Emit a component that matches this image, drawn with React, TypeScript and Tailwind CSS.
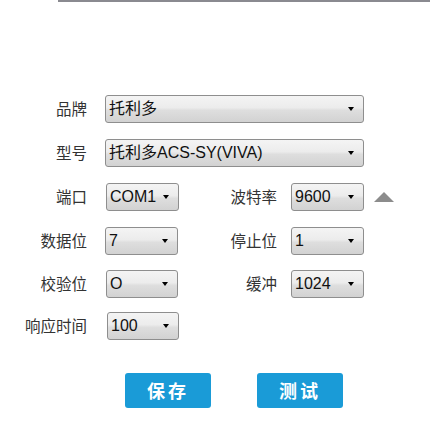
const cjk = "font-['Liberation_Sans','Noto_Sans_CJK_SC',sans-serif]";

const Select = ({ value, width }: { value: string; width: string }) => (
  <div
    className={`${width} h-[28px] flex items-center justify-between pl-[3px] pr-[9px] border border-[#8e8e8e] rounded-[3px] bg-[linear-gradient(to_bottom,#f4f4f4_0%,#ececec_45%,#dedede_55%,#d2d2d2_100%)] text-[16px] text-[#111] ${cjk}`}
  >
    <span className="leading-none">{value}</span>
    <span className="w-0 h-0 border-l-[3.5px] border-r-[3.5px] border-t-[4px] border-l-transparent border-r-transparent border-t-black" />
  </div>
);

const Label = ({ text, width }: { text: string; width: string }) => (
  <span className={`${width} text-right text-[15.5px] text-[#333] font-['Noto_Sans_CJK_SC',sans-serif]`}>
    {text}
  </span>
);

const Row = ({ children, className = "" }: { children: React.ReactNode; className?: string }) => (
  <div className={`flex items-center h-[28px] ${className}`}>{children}</div>
);

const App = () => {
  return (
    <div className="w-[430px] h-[436px] bg-white overflow-hidden">
      <div className="ml-[58px] h-[2px] bg-[#8a8a90]" />

      <div className="mt-[93px] flex flex-col">
        <Row>
          <Label text="品牌" width="w-[87px]" />
          <div className="ml-[18px]">
            <Select value="托利多" width="w-[259px]" />
          </div>
        </Row>

        <Row className="mt-[16px]">
          <Label text="型号" width="w-[87px]" />
          <div className="ml-[18px]">
            <Select value="托利多ACS-SY(VIVA)" width="w-[259px]" />
          </div>
        </Row>

        <Row className="mt-[16px]">
          <Label text="端口" width="w-[87px]" />
          <div className="ml-[19px]">
            <Select value="COM1" width="w-[73px]" />
          </div>
          <Label text="波特率" width="w-[98px]" />
          <div className="ml-[14px]">
            <Select value="9600" width="w-[73px]" />
          </div>
          <span className="ml-[10px] w-0 h-0 border-l-[10.5px] border-r-[10.5px] border-b-[10px] border-l-transparent border-r-transparent border-b-[#8c8c8c]" />
        </Row>

        <Row className="mt-[16px]">
          <Label text="数据位" width="w-[87px]" />
          <div className="ml-[18px]">
            <Select value="7" width="w-[73px]" />
          </div>
          <Label text="停止位" width="w-[99px]" />
          <div className="ml-[14px]">
            <Select value="1" width="w-[73px]" />
          </div>
        </Row>

        <Row className="mt-[15px]">
          <Label text="校验位" width="w-[87px]" />
          <div className="ml-[19px]">
            <Select value="O" width="w-[72px]" />
          </div>
          <Label text="缓冲" width="w-[99px]" />
          <div className="ml-[14px]">
            <Select value="1024" width="w-[73px]" />
          </div>
        </Row>

        <Row className="mt-[14px]">
          <Label text="响应时间" width="w-[87px]" />
          <div className="ml-[20px]">
            <Select value="100" width="w-[72px]" />
          </div>
        </Row>

        <div className="mt-[33px] ml-[125px] flex gap-[46px]">
          <button className="w-[86px] h-[35px] rounded-[3px] bg-[#1a9bd7] text-white text-[18px] font-bold tracking-[3px] font-['Noto_Sans_CJK_SC',sans-serif]">
            保存
          </button>
          <button className="w-[86px] h-[35px] rounded-[3px] bg-[#1a9bd7] text-white text-[18px] font-bold tracking-[3px] font-['Noto_Sans_CJK_SC',sans-serif]">
            测试
          </button>
        </div>
      </div>
    </div>
  );
};

export default App;
